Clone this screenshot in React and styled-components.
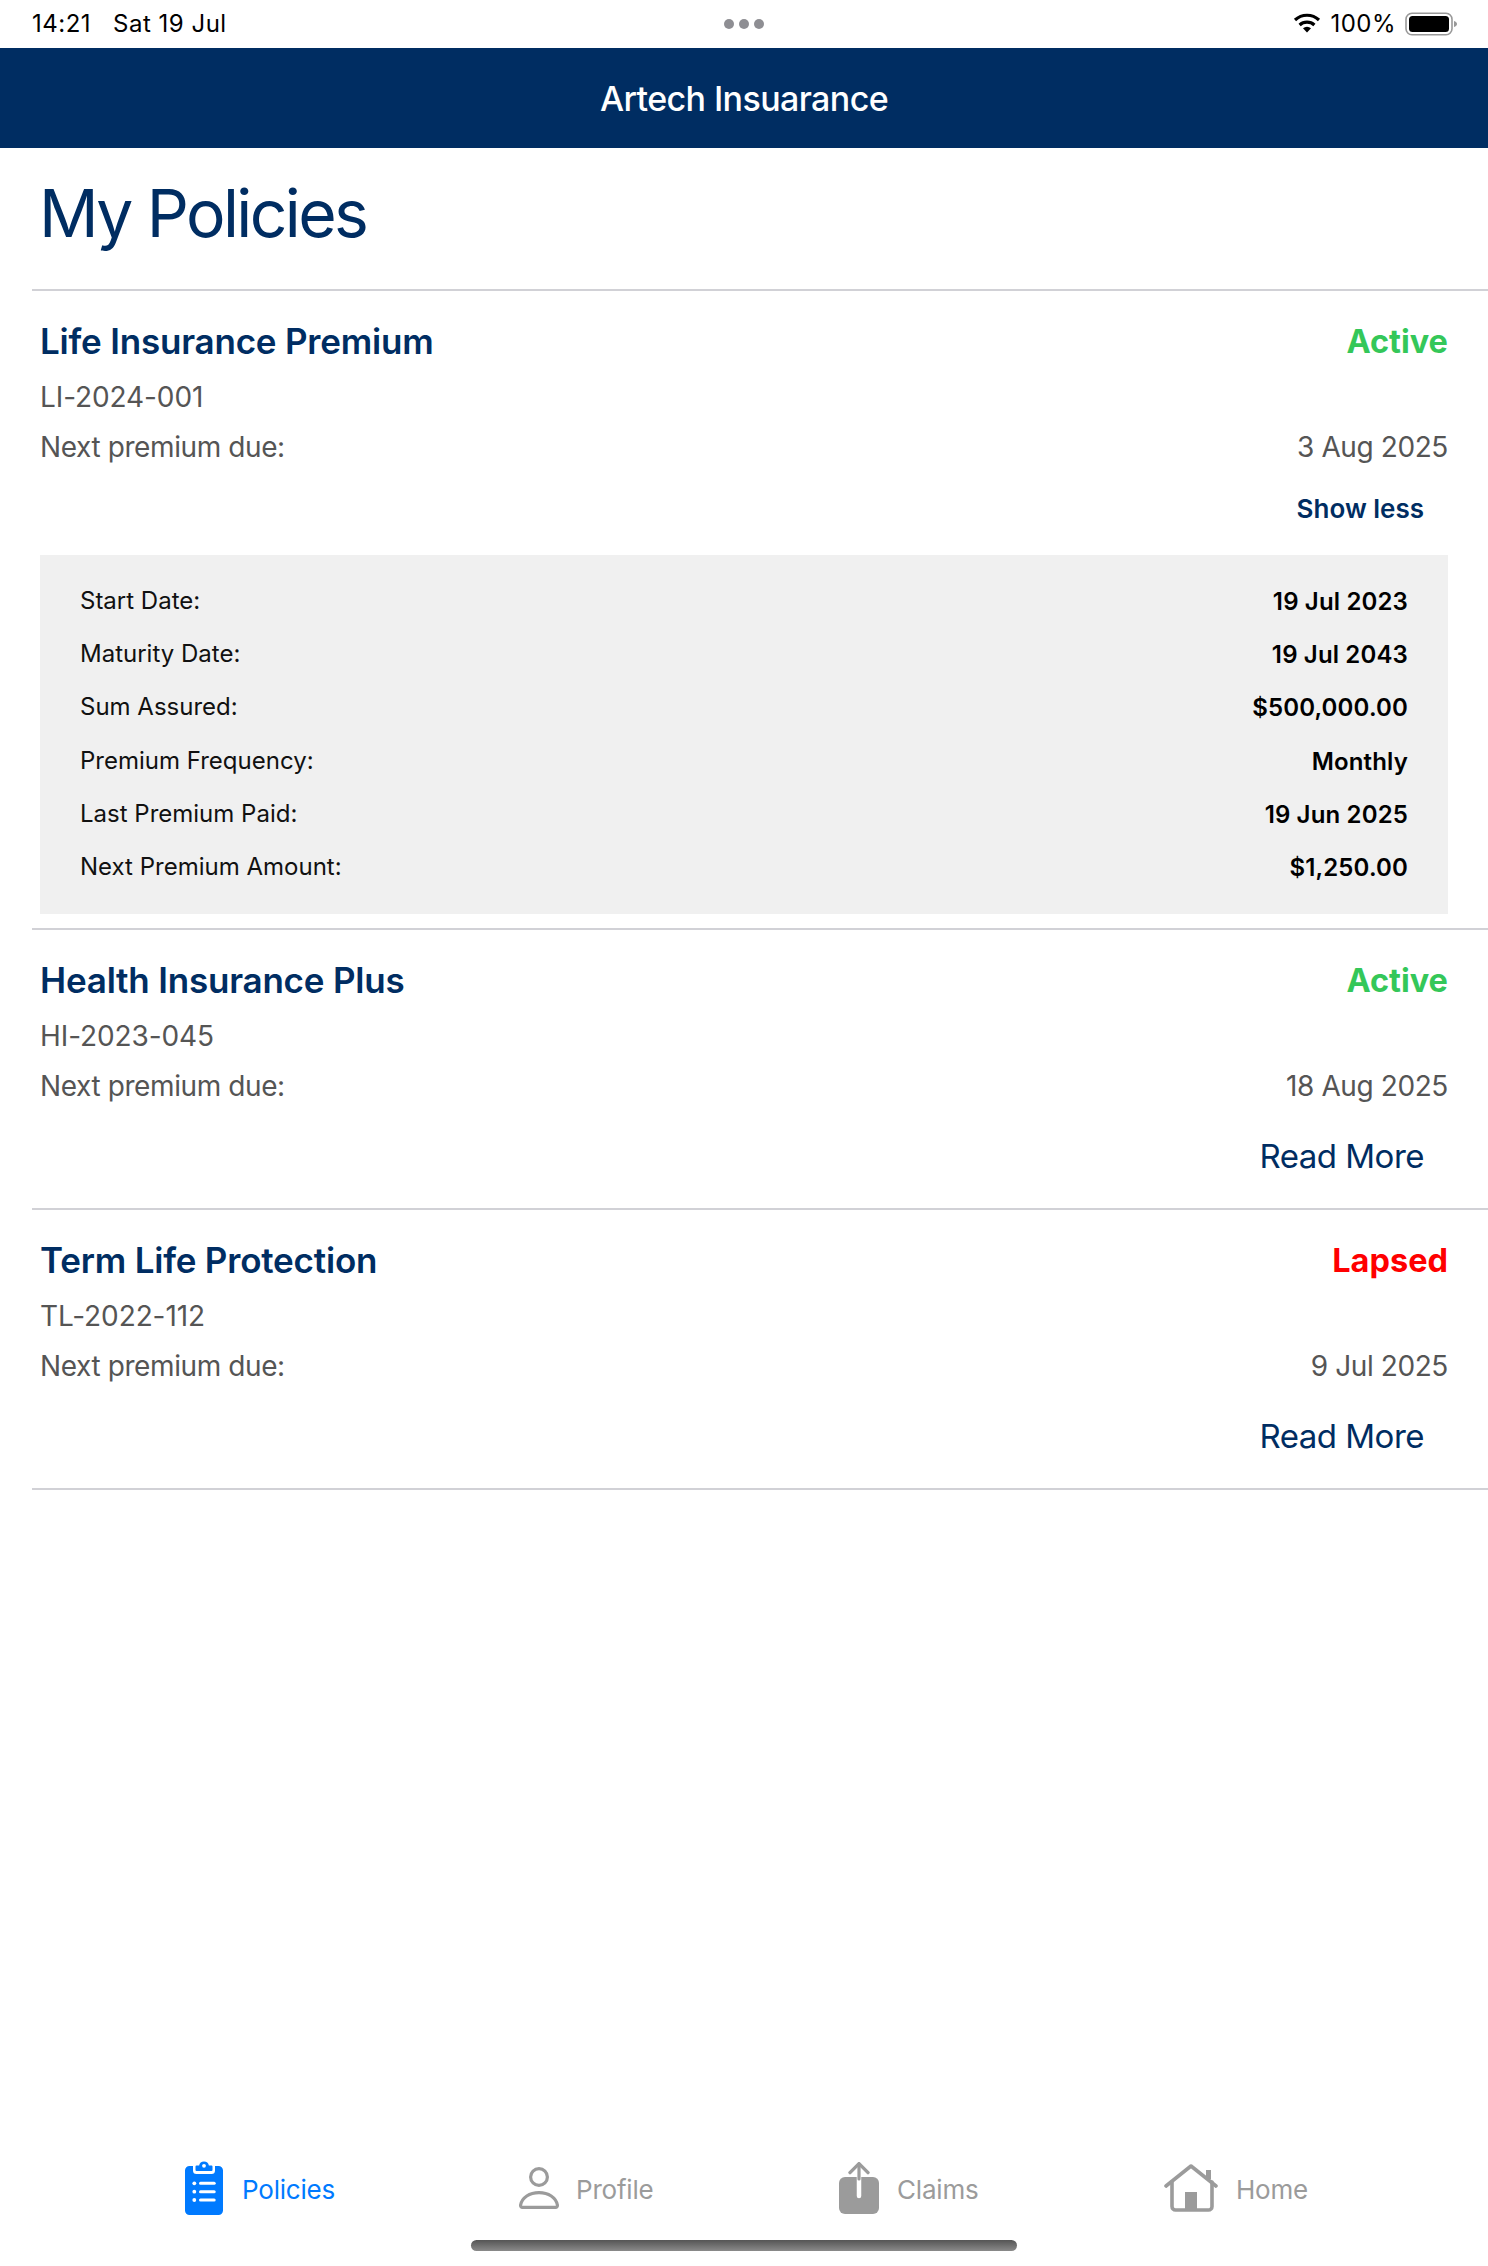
import React from 'react';
import styled, { createGlobalStyle } from 'styled-components';

const Global = createGlobalStyle`
  html, body { margin: 0; padding: 0; background: #fff; }
  body { font-family: Inter, "Liberation Sans", sans-serif; -webkit-font-smoothing: antialiased; }
  * { box-sizing: border-box; }
`;
const NAVY = '#002d62';

const Page = styled.div`
  position: relative; width: 1488px; height: 2266px; display: flex; flex-direction: column; background: #fff; overflow: hidden;
`;
const StatusBar = styled.div`
  height: 48px; display: grid; grid-template-columns: 1fr auto 1fr; align-items: center; padding: 0 30px 0 32px; color: #000; font-size: 24px; line-height: 48px; letter-spacing: 0.5px;
`;
const StatusLeft = styled.div`display: flex; gap: 22px;`;
const Dots = styled.div`
  display: flex; gap: 5px; margin-left: -2px;
  i { width: 10px; height: 10px; border-radius: 50%; background: #8e8e93; display: block; }
`;
const StatusRight = styled.div`
  display: flex; justify-content: flex-end; align-items: center; gap: 9px;
`;
const NavBar = styled.header`
  height: 100px; background: ${NAVY}; color: #fff; display: flex; align-items: center; justify-content: center; font-size: 34px; font-weight: 500; letter-spacing: -0.6px;
`;
const Title = styled.h1`
  margin: 0 0 0 32px; height: 143px; padding: 26px 0 0 7px; font-size: 66px; line-height: 78px; font-weight: 400; letter-spacing: -2.6px; color: ${NAVY}; border-bottom: 2px solid #d1d1d6;
`;
const Card = styled.section`
  margin-left: 32px; padding: 0 40px 0 8px; border-bottom: 2px solid #d1d1d6;
  height: ${p => p.$h}px;
`;
const HeadRow = styled.div`
  display: flex; justify-content: space-between; align-items: center; height: 48px; margin-top: 26px;
`;
const PolicyName = styled.h2`margin: 0; font-size: 35px; font-weight: 600; color: ${NAVY}; letter-spacing: -0.2px;`;
const Status = styled.span`font-size: 32.5px; font-weight: 700; color: ${p => p.$c};`;
const PolicyNo = styled.div`font-size: 28px; line-height: 34px; color: #555; margin-top: 15px; letter-spacing: -0.1px;`;
const DueRow = styled.div`
  display: flex; justify-content: space-between; font-size: 28px; line-height: 34px; color: #555; margin-top: 16px; letter-spacing: -0.4px;
`;
const LinkRow = styled.div`display: flex; justify-content: flex-end; padding-right: 24px;`;
const ShowLess = styled.button`
  all: unset; font-size: 26px; line-height: 32px; font-weight: 600; color: ${NAVY}; margin-top: 29px;
`;
const ReadMore = styled.button`
  all: unset; font-size: 33px; line-height: 42px; letter-spacing: -0.5px; color: ${NAVY}; margin-top: 32px;
`;
const Details = styled.div`
  margin-top: 30px; height: 359px; background: #f0f0f0; padding: 19px 40px 0;
`;
const DetailRow = styled.div`
  display: flex; justify-content: space-between; align-items: center; height: 53.2px; font-size: 24px; color: #111;
  b { font-weight: 600; color: #000; padding-top: 2px; letter-spacing: 0.15px; }
`;
const TabBar = styled.nav`
  margin-top: auto; height: 118px; display: grid; grid-template-columns: 334px 320px 325px 1fr; padding-left: 185px;
  align-items: start;
`;
const Tab = styled.div`
  height: 62px; margin-top: 10px; display: flex; align-items: center; gap: ${p => p.$gap}px; font-size: 26px; letter-spacing: -0.2px; color: ${p => p.$active ? '#007aff' : '#9b9b9b'};
  svg { flex: none; margin-bottom: 3px; }
`;
const HomeBar = styled.div`
  position: absolute; left: 471px; top: 2240px; width: 546px; height: 11px; border-radius: 6px;
  background: linear-gradient(to bottom, #555, #8a8a8a);
`;

const Wifi = () => (
  <svg width="28" height="22" viewBox="0 0 28 22">
    <path d="M14 19.500 l-4-4.200 a6 6 0 0 1 8 0z" fill="#000" />
    <path d="M6.600 12 a11 11 0 0 1 14.800 0 M2 7 a17.600 17.600 0 0 1 24 0" fill="none" stroke="#000" strokeWidth="3.200" />
  </svg>
);
const Battery = () => (
  <svg width="53" height="24" viewBox="0 0 53 24">
    <rect x="1" y="1.200" width="46" height="21.600" rx="6" fill="none" stroke="#999" strokeWidth="1.600" />
    <rect x="4" y="4" width="40" height="16" rx="3.500" fill="#000" />
    <path d="M49 9v6c1.800-.5 3-1.600 3-3s-1.200-2.500-3-3z" fill="#999" />
  </svg>
);
const PolicyIcon = () => (
  <svg width="38" height="55" viewBox="0 0 38 55">
    <path d="M4.500 6H8v4.500A3.500 3.500 0 0 0 11.500 14h15a3.500 3.500 0 0 0 3.500-3.500V6h3.500A4.500 4.500 0 0 1 38 10.500v40a4.500 4.500 0 0 1-4.500 4.500h-29A4.500 4.500 0 0 1 0 50.500v-40A4.500 4.500 0 0 1 4.500 6z" fill="#007aff" />
    <path d="M10.500 10V6.500a1 1 0 0 1 1-1h2.600a5 5 0 0 1 9.800 0h2.600a1 1 0 0 1 1 1V10a1 1 0 0 1-1 1h-15a1 1 0 0 1-1-1z" fill="#007aff" />
    <circle cx="19" cy="5.800" r="1.900" fill="#fff" />
    <g fill="#fff">
      <circle cx="9.300" cy="23.300" r="1.900" /><circle cx="9.300" cy="31.700" r="1.900" /><circle cx="9.300" cy="40" r="1.900" />
      <rect x="14" y="21.800" width="16.700" height="3" rx="1.500" /><rect x="14" y="30.200" width="16.700" height="3" rx="1.500" /><rect x="14" y="38.500" width="16.700" height="3" rx="1.500" />
    </g>
  </svg>
);
const ProfileIcon = () => (
  <svg width="40" height="42" viewBox="0 0 40 42" fill="none" stroke="#9b9b9b" strokeWidth="3.200">
    <circle cx="20" cy="10" r="8.400" />
    <path d="M3.500 40.400h33a2 2 0 0 0 1.900-2.400C37 30.500 29.500 25.600 20 25.600S3 30.500 1.600 38a2 2 0 0 0 1.900 2.400z" />
  </svg>
);
const ClaimsIcon = () => (
  <svg width="40" height="52" viewBox="0 0 40 52">
    <rect x="0" y="15" width="40" height="37" rx="6" fill="#9b9b9b" />
    <path d="M20 15v19" stroke="#fff" strokeWidth="4.500" strokeLinecap="round" />
    <path d="M20 2v15" stroke="#9b9b9b" strokeWidth="3.200" strokeLinecap="round" />
    <path d="M11 10.600L20 1.600l9 9" fill="none" stroke="#9b9b9b" strokeWidth="3.400" strokeLinecap="round" strokeLinejoin="round" />
  </svg>
);
const HomeIcon = () => (
  <svg width="54" height="48" viewBox="0 0 54 48" fill="none" stroke="#9b9b9b" strokeWidth="3.600" strokeLinecap="round" strokeLinejoin="round">
    <path d="M2 22L27 2l25 20" />
    <path d="M8 18v24.500a3.500 3.500 0 0 0 3.500 3.500h33a3.500 3.500 0 0 0 3.500-3.500V18" />
    <rect x="21" y="28" width="12" height="18" fill="#9b9b9b" stroke="none" />
    <path d="M44.500 6v9" strokeWidth="5" strokeLinecap="butt" />
  </svg>
);

const details = [
  ['Start Date:', '19 Jul 2023'],
  ['Maturity Date:', '19 Jul 2043'],
  ['Sum Assured:', '$500,000.00'],
  ['Premium Frequency:', 'Monthly'],
  ['Last Premium Paid:', '19 Jun 2025'],
  ['Next Premium Amount:', '$1,250.00'],
];

const PolicyCard = ({ name, status, color, no, due, h, expanded }) => (
  <Card $h={h}>
    <HeadRow>
      <PolicyName>{name}</PolicyName>
      <Status $c={color}>{status}</Status>
    </HeadRow>
    <PolicyNo>{no}</PolicyNo>
    <DueRow><span>Next premium due:</span><span>{due}</span></DueRow>
    <LinkRow>{expanded ? <ShowLess>Show less</ShowLess> : <ReadMore>Read More</ReadMore>}</LinkRow>
    {expanded && (
      <Details>
        {details.map(([k, v]) => (
          <DetailRow key={k}><span>{k}</span><b>{v}</b></DetailRow>
        ))}
      </Details>
    )}
  </Card>
);

export default function App() {
  return (
    <Page>
      <Global />
      <StatusBar>
        <StatusLeft><span>14:21</span><span>Sat 19 Jul</span></StatusLeft>
        <Dots><i /><i /><i /></Dots>
        <StatusRight><Wifi /><span>100%</span><Battery /></StatusRight>
      </StatusBar>
      <NavBar>Artech Insuarance</NavBar>
      <Title>My Policies</Title>
      <PolicyCard expanded h={639} name="Life Insurance Premium" status="Active" color="#34c759" no="LI-2024-001" due="3 Aug 2025" />
      <PolicyCard h={280} name="Health Insurance Plus" status="Active" color="#34c759" no="HI-2023-045" due="18 Aug 2025" />
      <PolicyCard h={280} name="Term Life Protection" status="Lapsed" color="#ff0000" no="TL-2022-112" due="9 Jul 2025" />
      <TabBar>
        <Tab $active $gap={19}><PolicyIcon /><span>Policies</span></Tab>
        <Tab $gap={17}><ProfileIcon /><span>Profile</span></Tab>
        <Tab $gap={18}><ClaimsIcon /><span>Claims</span></Tab>
        <Tab $gap={18}><HomeIcon /><span>Home</span></Tab>
      </TabBar>
      <HomeBar />
    </Page>
  );
}
